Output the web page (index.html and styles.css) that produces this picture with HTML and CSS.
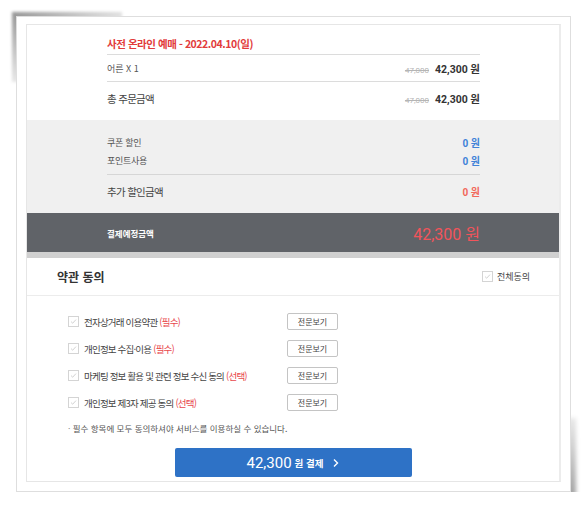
FILE: index.html
```html
<!DOCTYPE html>
<html lang="ko">
<head>
<meta charset="utf-8">
<link rel="stylesheet" href="styles.css">
</head>
<body>
<div class="paper">
  <div class="sheet">
    <section class="order">
      <div class="title">사전 온라인 예매 - 2022.04.10(일)</div>
      <div class="row row-item">
        <span class="label">어른 X 1</span>
        <span class="price"><del>47,000</del><b>42,300 원</b></span>
      </div>
      <div class="row row-total">
        <span class="label">총 주문금액</span>
        <span class="price"><del>47,000</del><b>42,300 원</b></span>
      </div>
    </section>
    <section class="discount">
      <div class="sub">
        <div class="row row-sub"><span class="label">쿠폰 할인</span><b class="blue">0 원</b></div>
        <div class="row row-sub"><span class="label">포인트사용</span><b class="blue">0 원</b></div>
      </div>
      <div class="row row-total">
        <span class="label">추가 할인금액</span><b class="orange">0 원</b>
      </div>
    </section>
    <section class="pay">
      <span class="pay-label">결제예정금액</span>
      <span class="pay-amount">42,300 원</span>
    </section>
    <section class="terms">
      <div class="terms-head">
        <h2>약관 동의</h2>
        <label class="check-all"><span class="cb"><svg viewBox="0 0 11 11"><path d="M2.5 5.6l2 2 4-4.4" fill="none" stroke="#c8c8c8" stroke-width="1"/></svg></span>전체동의</label>
      </div>
      <div class="terms-list">
        <div class="term">
          <label><span class="cb"><svg viewBox="0 0 11 11"><path d="M2.5 5.6l2 2 4-4.4" fill="none" stroke="#c8c8c8" stroke-width="1"/></svg></span>전자상거래 이용약관 <em>(필수)</em></label>
          <button class="view">전문보기</button>
        </div>
        <div class="term">
          <label><span class="cb"><svg viewBox="0 0 11 11"><path d="M2.5 5.6l2 2 4-4.4" fill="none" stroke="#c8c8c8" stroke-width="1"/></svg></span>개인정보 수집·이용 <em>(필수)</em></label>
          <button class="view">전문보기</button>
        </div>
        <div class="term">
          <label><span class="cb"><svg viewBox="0 0 11 11"><path d="M2.5 5.6l2 2 4-4.4" fill="none" stroke="#c8c8c8" stroke-width="1"/></svg></span>마케팅 정보 활용 및 관련 정보 수신 동의 <em>(선택)</em></label>
          <button class="view">전문보기</button>
        </div>
        <div class="term">
          <label><span class="cb"><svg viewBox="0 0 11 11"><path d="M2.5 5.6l2 2 4-4.4" fill="none" stroke="#c8c8c8" stroke-width="1"/></svg></span>개인정보 제3자 제공 동의 <em>(선택)</em></label>
          <button class="view">전문보기</button>
        </div>
        <p class="note"><span class="dot">·</span> 필수 항목에 모두 동의하셔야 서비스를 이용하실 수 있습니다.</p>
      </div>
      <div class="submit-wrap">
        <button class="submit"><span class="num">42,300</span><span class="won">원 결제</span><svg class="chev" viewBox="0 0 8 10"><path d="M2 1.5l3.5 3.5L2 8.5" fill="none" stroke="#fff" stroke-width="1.4"/></svg></button>
      </div>
    </section>
  </div>
</div>
</body>
</html>
```

FILE: styles.css
```css
* { box-sizing: border-box; }
html { background: #fff; }
html, body { margin: 0; padding: 0; }
body {
  font-family: "Noto Sans CJK KR", "Noto Sans", sans-serif;
  color: #444;
  padding: 16px 0 0 16px;
}
.paper {
  position: relative;
  width: 555px;
  height: 476px;
  border: 1px solid #dedede;
  background: #fff;
  padding: 7px 8px 0 9px;
}
.paper::before {
  content: "";
  position: absolute;
  left: -5px; top: -5px;
  width: 110px; height: 70px;
  background: linear-gradient(150deg, rgba(0,0,0,0.42) 0%, rgba(0,0,0,0.2) 35%, rgba(0,0,0,0) 70%);
  filter: blur(1.5px);
  z-index: -1;
}
.paper::after {
  content: "";
  position: absolute;
  right: -6px; bottom: -7px;
  width: 130px; height: 80px;
  background: linear-gradient(330deg, rgba(0,0,0,0.38) 0%, rgba(0,0,0,0.18) 35%, rgba(0,0,0,0) 70%);
  filter: blur(2px);
  z-index: -1;
}
.sheet {
  width: 535px;
  height: 458px;
  border: 1px solid #e6e6e6;
  border-right: 2px solid #ececec;
  overflow: hidden;
}
.order { padding: 0 79px 6px 80px; }
.title {
  padding-top: 8px;
  line-height: 21px;
  font-size: 10.5px;
  letter-spacing: -0.45px;
  font-weight: 700;
  color: #e23b3b;
  border-bottom: 1px solid #dcdcdc;
}
.row {
  display: flex;
  justify-content: space-between;
  align-items: center;
}
.row-item {
  height: 27px;
  border-bottom: 1px solid #dcdcdc;
  font-size: 9px;
  color: #555;
}
.row-total {
  height: 32px;
  font-size: 10.5px;
  letter-spacing: -0.7px;
  color: #444;
}
.price { display: flex; align-items: baseline; gap: 6px; letter-spacing: 0; }
.price del {
  font-size: 8px;
  color: #b5b5b5;
  font-family: "Roboto", sans-serif;
}
.price b {
  font-size: 10.5px;
  font-weight: 700;
  color: #333;
  font-family: "Roboto", "Noto Sans CJK KR", sans-serif;
}
.discount {
  background: #f0f0f0;
  padding: 13px 79px 6px 80px;
}
.sub { padding-bottom: 5px; border-bottom: 1px solid #d6d6d6; }
.row-sub { height: 18px; font-size: 9px; letter-spacing: -0.3px; color: #555; }
.blue, .orange {
  font-size: 10px;
  font-weight: 700;
  letter-spacing: 0;
  font-family: "Roboto", "Noto Sans CJK KR", sans-serif;
}
.blue { color: #3f82d8; }
.orange { color: #f2685a; }
.pay {
  height: 45px;
  background: #606368;
  border-bottom: 6px solid #d0d0d0;
  display: flex;
  justify-content: space-between;
  align-items: center;
  padding: 0 79px 0 80px;
}
.pay-label { font-size: 8.5px; font-weight: 700; color: #fff; }
.pay-amount {
  font-size: 16px;
  color: #f2545b;
  font-family: "Roboto", "Noto Sans CJK KR", sans-serif;
}
.terms-head {
  height: 38px;
  border-bottom: 1px solid #ececec;
  display: flex;
  justify-content: space-between;
  align-items: center;
  padding: 0 29px 0 30px;
}
.terms-head h2 { margin: 0; font-size: 12px; font-weight: 700; color: #333; }
.check-all { display: flex; align-items: center; gap: 4px; font-size: 9px; color: #444; }
.cb {
  width: 11px; height: 11px;
  border: 1px solid #d4d4d4;
  background: #fff;
  display: inline-flex;
  flex: none;
}
.cb svg { width: 100%; height: 100%; }
.terms-list { padding: 12px 0 0 41px; }
.term {
  height: 27px;
  display: grid;
  grid-template-columns: 219px 51px;
  align-items: center;
}
.term label {
  display: flex;
  align-items: center;
  gap: 5px;
  font-size: 9.5px;
  letter-spacing: -0.8px;
  color: #444;
  white-space: nowrap;
}
.term em { font-style: normal; color: #e8474c; margin-left: -3px; }
.view {
  width: 51px; height: 17px;
  padding: 0;
  border: 1px solid #c4c4c4;
  border-radius: 2px;
  background: #fff;
  font-family: inherit;
  font-size: 8px;
  color: #444;
}
.note {
  margin: 4px 0 0;
  line-height: 16px;
  font-size: 8.5px;
  color: #555;
}
.note .dot { color: #888; }
.submit-wrap { display: flex; justify-content: center; padding-top: 12px; }
.submit {
  width: 237px; height: 29px;
  border: 0;
  border-radius: 2px;
  background: #2e72c6;
  color: #fff;
  display: flex;
  align-items: center;
  justify-content: center;
  gap: 3px;
  padding: 0;
  font-family: inherit;
}
.submit .num { font-family: "Roboto", sans-serif; font-size: 15px; }
.submit .won { font-size: 9.5px; font-weight: 700; }
.submit .chev { width: 8px; height: 10px; margin-left: 5px; }
```
